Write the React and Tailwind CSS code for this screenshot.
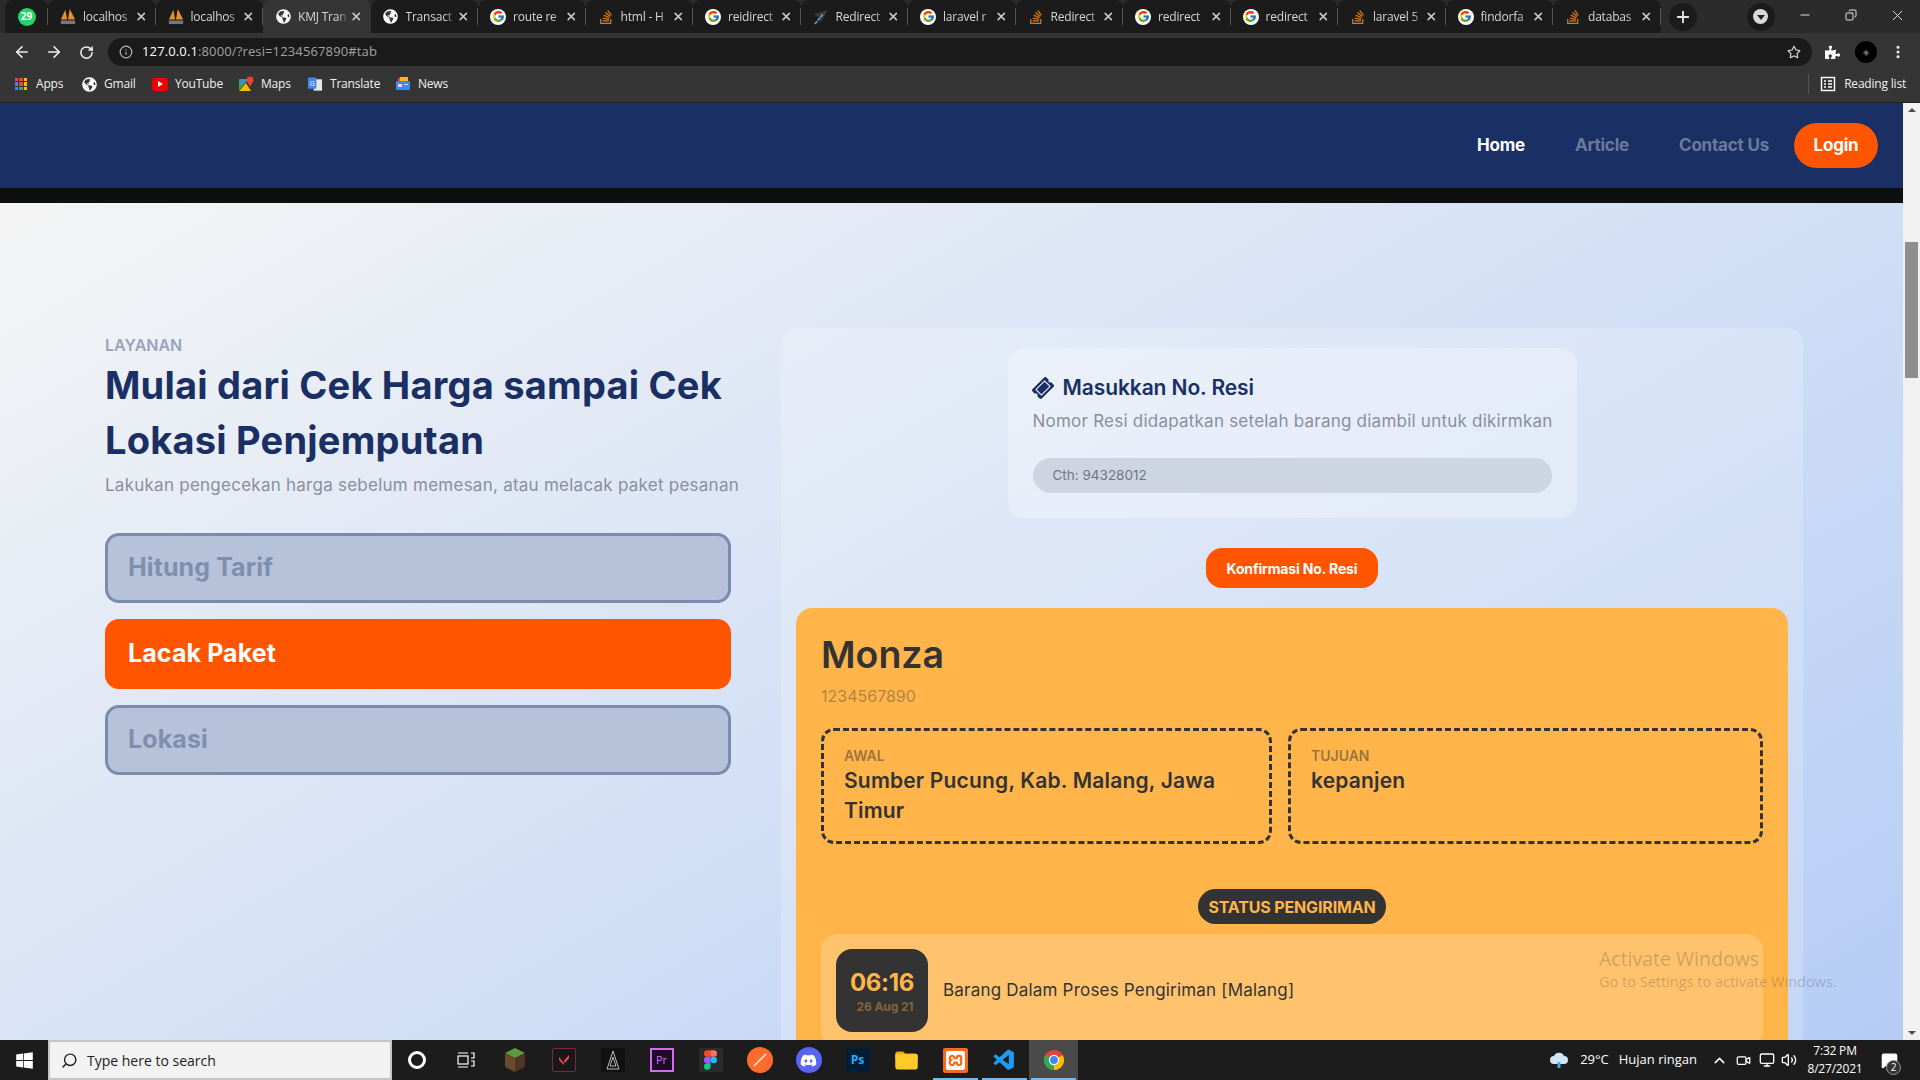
import React from "react";
import { FcGoogle, FcFolder } from "react-icons/fc";
import { FaStackOverflow, FaGlobeAmericas, FaWindows, FaTicketAlt, FaPuzzlePiece, FaDiscord, FaRegStar } from "react-icons/fa";
import { VscVscode } from "react-icons/vsc";
import { SiXampp } from "react-icons/si";
import { Search, X, Plus, Minus, ArrowLeft, ArrowRight, RotateCw, Info, MoreVertical, ChevronUp, Volume2, Monitor, Video, Copy, MessageSquare } from "lucide-react";

const Kiri = () => (
  <svg width="18" height="19" viewBox="0 0 18 19">
    <path d="M1 13 L6 2 L8 13Z M9 13 L11 1 L17 13Z" fill="#e8912a" />
    <rect x="1" y="14" width="16" height="4" fill="#77777f" />
  </svg>
);
const Plane = () => (
  <svg width="18" height="18" viewBox="0 0 18 18">
    <path d="M17 1 L1 6 L6 9 L8 16Z" fill="#3a3a3a" />
    <path d="M11 6 L2 17" stroke="#42a5e8" strokeWidth="2" strokeDasharray="4 1" />
  </svg>
);
const G = () => (
  <span className="flex h-4 w-4 items-center justify-center rounded-full bg-white">
    <FcGoogle size={13} />
  </span>
);
const SO = () => <FaStackOverflow size={16} color="#d9771f" />;
const Globe = () => (
  <span className="flex h-[15px] w-[15px] items-center justify-center rounded-full bg-[#353535]">
    <FaGlobeAmericas size={15} color="#ffffff" />
  </span>
);

const tabs = [
  [<Kiri />, "localhos"],
  [<Kiri />, "localhos"],
  [<Globe />, "KMJ Tran", true],
  [<Globe />, "Transact"],
  [<G />, "route re"],
  [<SO />, "html - H"],
  [<G />, "reidirect"],
  [<Plane />, "Redirect"],
  [<G />, "laravel r"],
  [<SO />, "Redirect"],
  [<G />, "redirect"],
  [<G />, "redirect"],
  [<SO />, "laravel 5"],
  [<G />, "findorfa"],
  [<SO />, "databas"],
];

const Tab = ({ icon, title, active }) => (
  <div className={`relative flex h-[33px] w-[107.5px] shrink-0 items-center rounded-t-lg pl-3 pr-2 ${active ? "bg-[#353535]" : "bg-[#1b1b1b]"}`}>
    <span className="flex w-4 shrink-0 items-center justify-center">{icon}</span>
    <span className="ml-[7px] w-[54px] whitespace-nowrap text-[12px] tracking-[-0.2px] text-[#d6d6d6] [mask-image:linear-gradient(to_right,black_75%,transparent)]">{title}</span>
    <X size={13} strokeWidth={3} className="ml-auto text-[#c8c8c8]" />
    {!active && <span className="absolute right-0 top-[8px] h-[17px] w-px bg-[#555555]" />}
  </div>
);

const Bookmark = ({ icon, label, w }) => (
  <div className={`flex shrink-0 items-center gap-[7px] text-[12px] tracking-[-0.2px] text-[#f0f0f0] ${w}`}>
    <span className="flex h-4 w-4 items-center justify-center">{icon}</span>
    <span>{label}</span>
  </div>
);

const Apps = () => (
  <div className="grid h-[12px] w-[12px] grid-cols-3 gap-px">
    {["bg-[#ea4335]", "bg-[#ea4335]", "bg-[#fbbc04]", "bg-[#4285f4]", "bg-[#ea4335]", "bg-[#fbbc04]", "bg-[#4285f4]", "bg-[#34a853]", "bg-[#fbbc04]"].map((c, i) => (
      <span key={i} className={c} />
    ))}
  </div>
);
const Maps = () => (
  <svg width="16" height="16" viewBox="0 0 16 16">
    <path d="M1 3 L11 3 L1 14Z" fill="#34a853" />
    <path d="M1 15 L8 7 L13 15Z" fill="#fbbc04" />
    <path d="M3 3 L10 3 L3 9Z" fill="#4285f4" />
    <circle cx="12" cy="4" r="3.4" fill="#ea4335" />
    <path d="M9.5 6 L12 11 L14.5 6Z" fill="#ea4335" />
  </svg>
);
const Translate = () => (
  <svg width="17" height="17" viewBox="0 0 17 17">
    <rect x="7" y="3" width="9" height="12" fill="#e8e8e8" />
    <rect x="1" y="1" width="9" height="12" rx="1" fill="#4285f4" />
    <text x="3" y="10" fontSize="7" fill="#fff" fontFamily="Liberation Sans">G</text>
  </svg>
);
const News = () => (
  <svg width="16" height="16" viewBox="0 0 16 16">
    <rect x="3" y="2" width="10" height="5" fill="#ea4335" />
    <rect x="5" y="1" width="8" height="5" fill="#fbbc04" />
    <rect x="1" y="5" width="14" height="9" rx="1" fill="#4285f4" />
    <rect x="3" y="8" width="4" height="3" fill="#cfe0ff" />
    <rect x="9" y="8" width="4" height="1" fill="#cfe0ff" />
  </svg>
);

const Chrome = () => (
  <svg width="22" height="22" viewBox="0 0 24 24">
    <circle cx="12" cy="12" r="11" fill="#ea4335" />
    <path d="M12 12 L2.5 6.5 A11 11 0 0 0 12 23Z" fill="#34a853" />
    <path d="M12 12 L12 23 A11 11 0 0 0 21.5 6.5Z" fill="#fbbc04" />
    <circle cx="12" cy="12" r="5.6" fill="#fff" />
    <circle cx="12" cy="12" r="4.3" fill="#4285f4" />
  </svg>
);
const Block = ({ c, children }) => (
  <span className={`flex h-[24px] w-[24px] items-center justify-center rounded-[2px] text-[12px] ${c}`}>{children}</span>
);
const FigmaMark = () => (
  <svg width="13" height="20" viewBox="0 0 12 18">
    <path d="M6 0H3a3 3 0 0 0 0 6h3Z" fill="#f24e1e" />
    <path d="M6 0h3a3 3 0 0 1 0 6H6Z" fill="#ff7262" />
    <path d="M6 6H3a3 3 0 0 0 0 6h3Z" fill="#a259ff" />
    <circle cx="9" cy="9" r="3" fill="#1abcfe" />
    <path d="M6 12H3a3 3 0 1 0 3 3Z" fill="#0acf83" />
  </svg>
);
const taskIcons = [
  <span className="h-[18px] w-[18px] rounded-full border-[3px] border-white" />,
  <svg width="18" height="18" viewBox="0 0 18 18" fill="none" stroke="#fff" strokeWidth="1.2">
    <rect x="1" y="5" width="10" height="8" /><path d="M1 2h10M1 16h10M14 2h3v5h-3M14 10h3v5h-3" />
  </svg>,
  <svg width="24" height="26" viewBox="0 0 24 26">
    <path d="M12 1 L22 6 L12 11 L2 6Z" fill="#5d9c3c" />
    <path d="M2 6 L12 11 L12 25 L2 20Z" fill="#6b4a2f" />
    <path d="M22 6 L12 11 L12 25 L22 20Z" fill="#4e3622" />
  </svg>,
  <Block c="bg-[#17171c] border border-[#7c2a38] text-[#ff4655]"><svg width="12" height="12" viewBox="0 0 12 12"><path d="M1 3 L6 9 L6 11 L1 6Z M11 1 L11 4 L7 9 L6 7Z" fill="#ff4655" /></svg></Block>,
  <Block c="bg-[#111111]"><svg width="14" height="20" viewBox="0 0 14 20" fill="none" stroke="#b9b9b9"><path d="M7 1 L13 19 L1 19Z M7 7 L10 16 L4 16Z" /></svg></Block>,
  <span className="flex h-[24px] w-[24px] items-center justify-center border-2 border-[#d36df0] bg-[#1d0a24] text-[11px] text-[#d36df0]">Pr</span>,
  <Block c="bg-[#2b2b2b]"><FigmaMark /></Block>,
  <span className="flex h-[26px] w-[26px] items-center justify-center rounded-full bg-[#ff6b2c]"><svg width="16" height="16" viewBox="0 0 16 16"><path d="M2 14 L14 2" stroke="#ffe3d6" strokeWidth="1.6" /></svg></span>,
  <span className="flex h-[26px] w-[26px] items-center justify-center rounded-full bg-[#5865f2]"><FaDiscord size={17} color="#fff" /></span>,
  <span className="flex h-[24px] w-[24px] items-center justify-center rounded-[2px] bg-[#001e36] text-[12px] font-bold text-[#31a8ff]">Ps</span>,
  <FcFolder size={27} />,
  <span className="flex h-[25px] w-[25px] items-center justify-center rounded-[2px] bg-[#f26b21]"><SiXampp size={19} color="#ffffff" /></span>,
  <VscVscode size={25} color="#1f9cf0" />,
  <Chrome />,
];

const nav = "text-[17px] font-bold tracking-[-0.2px]";
const Place = ({ label, value, cls }) => (
  <div className={`rounded-[13px] border-[3px] border-dashed border-[#333333] px-[20px] pb-[15px] pt-[15px] ${cls}`}>
    <div className="text-[14px] font-semibold leading-[20px] text-[#333333]/50">{label}</div>
    <div className="text-[21px] font-semibold leading-[30px] tracking-[0.18px] text-[#333333]">{value}</div>
  </div>
);
const Choice = ({ label, active }) => (
  <div className={`flex h-[70px] items-center rounded-[14px] text-[25px] font-bold tracking-[0.1px] ${active ? "bg-[#ff5500] pl-[23px] text-white" : "border-[3px] border-[#7b8bac] bg-[#b5c2da] pl-[20px] text-[#7f8eae]"}`}>
    {label}
  </div>
);

export default function App() {
  return (
    <div className="relative flex h-screen w-[1920px] flex-col overflow-hidden bg-[#2b2b2b] font-['Inter',sans-serif]">
      {/* browser chrome */}
      <div className="font-['Open_Sans',sans-serif]">
        <div className="flex h-[33px] items-center bg-[#2b2b2b] pl-[5px]">
          <div className="relative flex h-[33px] w-[43px] items-center justify-center rounded-t-lg bg-[#1b1b1b]">
            <span className="flex h-[18px] w-[18px] items-center justify-center rounded-full bg-[#25d366] text-[10px] font-bold text-white">29</span>
            <span className="absolute right-0 top-[8px] h-[17px] w-px bg-[#555555]" />
          </div>
          {tabs.map(([icon, title, active], i) => (
            <Tab key={i} icon={icon} title={title} active={active} />
          ))}
          <span className="ml-[8px] flex h-[28px] w-[28px] items-center justify-center rounded-full bg-[#1b1b1b]">
            <Plus size={18} strokeWidth={2.5} color="#e5e5e5" />
          </span>
          <span className="ml-[50px] flex h-[28px] w-[28px] items-center justify-center rounded-full bg-[#1b1b1b]">
            <span className="flex h-[15px] w-[15px] items-center justify-center rounded-full bg-[#d9d9d9]">
              <span className="mt-[2px] h-0 w-0 border-x-[4px] border-t-[5px] border-x-transparent border-t-[#222222]" />
            </span>
          </span>
          <div className="ml-auto flex h-full items-center pb-[3px] text-[#e0e0e0]">
            <span className="flex w-[46px] justify-center"><Minus size={14} /></span>
            <span className="flex w-[46px] justify-center"><Copy size={12} className="-scale-x-100" /></span>
            <span className="flex w-[46px] justify-center"><X size={17} strokeWidth={1.4} /></span>
          </div>
        </div>
        <div className="flex h-[33px] items-center bg-[#353535] pl-[13px] pt-[5px] text-[#eeeeee]">
          <ArrowLeft size={18} strokeWidth={2.2} />
          <ArrowRight size={18} strokeWidth={2.2} className="ml-[14px]" />
          <RotateCw size={15} strokeWidth={2.4} className="ml-[16px]" />
          <div className="ml-[14px] flex h-[28px] w-[1704px] items-center rounded-full bg-[#1a1a1a] pl-[11px] pr-[11px] text-[13px] tracking-[0.13px]">
            <Info size={14} color="#b8b8b8" />
            <span className="ml-[9px] text-white">127.0.0.1</span>
            <span className="text-[#a2a2a2]">:8000/?resi=1234567890#tab</span>
            <FaRegStar size={14} color="#d5d5d5" className="ml-auto" />
          </div>
          <FaPuzzlePiece size={15} color="#ffffff" className="ml-[13px]" />
          <span className="ml-[15px] flex h-[22px] w-[22px] items-center justify-center rounded-full bg-black text-[8px] text-[#777777]">◈</span>
          <MoreVertical size={16} strokeWidth={2.6} className="ml-[13px]" />
        </div>
        <div className="flex h-[37px] items-center border-b border-[#222222] bg-[#353535] pl-[13px]">
          <Bookmark icon={<Apps />} label="Apps" w="w-[68px]" />
          <Bookmark icon={<Globe />} label="Gmail" w="w-[71px]" />
          <Bookmark icon={<span className="flex h-[13px] w-4 items-center justify-center rounded-[3px] bg-[#f00000]"><span className="ml-px h-0 w-0 border-y-[3px] border-l-[5px] border-y-transparent border-l-white" /></span>} label="YouTube" w="w-[86px]" />
          <Bookmark icon={<Maps />} label="Maps" w="w-[69px]" />
          <Bookmark icon={<Translate />} label="Translate" w="w-[88px]" />
          <Bookmark icon={<News />} label="News" w="w-[60px]" />
          <div className="ml-auto flex items-center pr-[14px] text-[12px] tracking-[-0.2px] text-[#f0f0f0]">
            <span className="mr-[11px] h-[20px] w-px bg-[#555555]" />
            <svg width="16" height="16" viewBox="0 0 16 16" fill="none" stroke="#fff" strokeWidth="1.4" className="mr-[8px]">
              <rect x="1.5" y="1.5" width="13" height="13" /><path d="M4 5h2M8 5h4M4 8h2M8 8h4M4 11h2M8 11h4" />
            </svg>
            Reading list
          </div>
        </div>
      </div>

      {/* viewport + scrollbar */}
      <div className="flex min-h-0 flex-1">
        <div className="min-w-0 flex-1 overflow-hidden">
          <header className="flex h-[85px] items-center justify-end bg-[#1a2f63] pr-[25px]">
            <span className={`${nav} text-white`}>Home</span>
            <span className={`${nav} ml-[50px] text-[#6b7a9c]`}>Article</span>
            <span className={`${nav} ml-[50px] text-[#6b7a9c]`}>Contact Us</span>
            <span className={`${nav} ml-[25px] flex h-[45px] w-[84px] items-center justify-center rounded-[23px] bg-[#ff5500] text-white`}>Login</span>
          </header>
          <div className="h-[15px] bg-[#0e0f0f]" />
          <main className="flex h-[1100px] bg-gradient-to-br from-[#f5f5f5] to-[#acc7f5] pl-[105px] pr-[100px] pt-[125px]">
            <section className="w-[626px] shrink-0 pt-[7px]">
              <div className="text-[16px] font-semibold leading-[20px] text-[#98a4bd]">LAYANAN</div>
              <h1 className="mt-[3px] whitespace-nowrap text-[38px] font-bold leading-[55px] tracking-[0.22px] text-[#1a2f63]">
                Mulai dari Cek Harga sampai Cek<br />Lokasi Penjemputan
              </h1>
              <p className="mt-[3px] whitespace-nowrap text-[17px] leading-[28px] tracking-[0.25px] text-[#8a8f9c]">Lakukan pengecekan harga sebelum memesan, atau melacak paket pesanan</p>
              <div className="mt-[34px] flex flex-col gap-[16px]">
                <Choice label="Hitung Tarif" />
                <Choice label="Lacak Paket" active />
                <Choice label="Lokasi" />
              </div>
            </section>
            <section className="ml-[50px] h-[900px] w-[1022px] shrink-0 rounded-[16px] bg-white/20 px-[15px] pt-[20px]">
              <div className="mx-auto flex h-[170px] w-[569px] flex-col rounded-[16px] bg-white/30 px-[25px] pt-[24px]">
                <div className="flex items-center gap-[10px]">
                  <FaTicketAlt size={20} color="#1a2f63" className="-rotate-45" />
                  <span className="text-[21px] font-semibold tracking-[-0.1px] text-[#1a2f63]">Masukkan No. Resi</span>
                </div>
                <p className="mt-[5px] whitespace-nowrap text-[17px] leading-[24px] tracking-[0.23px] text-[#8a8f9c]">Nomor Resi didapatkan setelah barang diambil untuk dikirmkan</p>
                <div className="mt-[25px] flex h-[35px] items-center rounded-full bg-[#cdd5e2] px-[20px] text-[13.5px] text-[#707580]">Cth: 94328012</div>
              </div>
              <div className="mt-[30px] flex justify-center">
                <span className="flex h-[40px] w-[172px] items-center justify-center rounded-[16px] bg-[#ff5500] text-[14px] font-bold tracking-[-0.15px] text-white">Konfirmasi No. Resi</span>
              </div>
              <div className="mt-[20px] h-[800px] rounded-[16px] bg-[#ffb54a] px-[25px] pt-[21px]">
                <div className="text-[37.5px] font-semibold leading-[52px] text-[#333333]">Monza</div>
                <div className="mt-[3px] text-[16px] leading-[24px] text-[#333333]/40">1234567890</div>
                <div className="mt-[20px] flex gap-[16px]">
                  <Place label="AWAL" value={<>Sumber Pucung, Kab. Malang, Jawa<br />Timur</>} cls="w-[451px]" />
                  <Place label="TUJUAN" value="kepanjen" cls="w-[475px]" />
                </div>
                <div className="mt-[45px] flex justify-center">
                  <span className="flex h-[35px] items-center rounded-full bg-[#333333] px-[10px] text-[16px] font-bold tracking-[-0.15px] text-[#ffb54a]">STATUS PENGIRIMAN</span>
                </div>
                <div className="mt-[10px] flex h-[113px] items-center rounded-[16px] bg-white/20 px-[15px]">
                  <div className="flex h-[83px] w-[92px] flex-col items-center justify-center rounded-[16px] bg-[#333333]">
                    <span className="text-[24px] font-bold leading-[32px] tracking-[-0.3px] text-[#ffb54a]">06:16</span>
                    <span className="pl-[6px] text-[12px] font-bold leading-[16px] tracking-[-0.1px] text-[#ffb54a]/40">26 Aug 21</span>
                  </div>
                  <span className="ml-[15px] text-[17px] tracking-[0.2px] text-[#333333]">Barang Dalam Proses Pengiriman [Malang]</span>
                </div>
              </div>
            </section>
          </main>
        </div>
        <div className="flex w-[17px] shrink-0 flex-col items-center justify-between bg-[#f1f1f1] py-[5px]">
          <span className="h-0 w-0 border-x-[4px] border-b-[4px] border-x-transparent border-b-[#505050]" />
          <span className="h-0 w-0 border-x-[4px] border-t-[4px] border-x-transparent border-t-[#505050]" />
        </div>
      </div>

      {/* taskbar */}
      <footer className="flex h-[40px] shrink-0 items-center bg-[#1c1c1c] font-['Open_Sans',sans-serif] text-white">
        <span className="flex w-[48px] justify-center"><FaWindows size={19} /></span>
        <div className="flex h-full w-[344px] items-center gap-[9px] border-2 border-[#c4c4c4] bg-[#f2f2f2] pl-[11px] text-[14px] text-[#222222]">
          <Search size={17} className="-scale-x-100" />
          Type here to search
        </div>
        <div className="flex h-full">
          {taskIcons.map((ic, i) => (
            <span key={i} className={`relative flex h-full w-[49px] items-center justify-center ${i === 13 ? "bg-[#4a4a4a]" : ""}`}>
              {ic}
              {i >= 11 && <span className="absolute inset-x-[2px] bottom-0 h-[2px] bg-[#76b9ed]" />}
            </span>
          ))}
        </div>
        <div className="ml-auto flex h-full items-center pr-[19px] text-[13px]">
          <svg width="20" height="20" viewBox="0 0 20 20" className="mr-[11px]">
            <path d="M5 14 A4 4 0 0 1 5 6 A5.5 5.5 0 0 1 15 6 A4 4 0 0 1 15 14Z" fill="#cfe6fa" />
            <path d="M10 12v6" stroke="#4aa6ea" strokeWidth="3" />
          </svg>
          <span>29°C</span>
          <span className="ml-[10px]">Hujan ringan</span>
          <ChevronUp size={17} className="ml-[14px]" />
          <Video size={15} className="ml-[8px]" />
          <Monitor size={16} className="ml-[8px]" />
          <Volume2 size={16} className="ml-[6px]" />
          <div className="ml-[8px] flex w-[60px] flex-col items-center text-[12px] leading-[18px] tracking-[-0.2px]">
            <span>7:32 PM</span>
            <span>8/27/2021</span>
          </div>
          <span className="relative ml-[12px] flex w-[24px] justify-center">
            <MessageSquare size={17} fill="#ffffff" />
            <span className="absolute -bottom-[6px] right-0 flex h-[15px] w-[15px] items-center justify-center rounded-full border border-[#999999] bg-[#333333] text-[10px]">2</span>
          </span>
        </div>
      </footer>

      {/* scrollbar thumb and watermark lie over the page */}
      <span className="absolute left-[1905px] top-[242px] h-[136px] w-[13px] bg-[#8e8e8e]" />
      <div className="absolute left-[1599px] top-[946px] font-['Open_Sans',sans-serif] text-[#333333]/25">
        <div className="text-[19.5px] leading-[26px]">Activate Windows</div>
        <div className="text-[14.5px] leading-[20px]">Go to Settings to activate Windows.</div>
      </div>
    </div>
  );
}
